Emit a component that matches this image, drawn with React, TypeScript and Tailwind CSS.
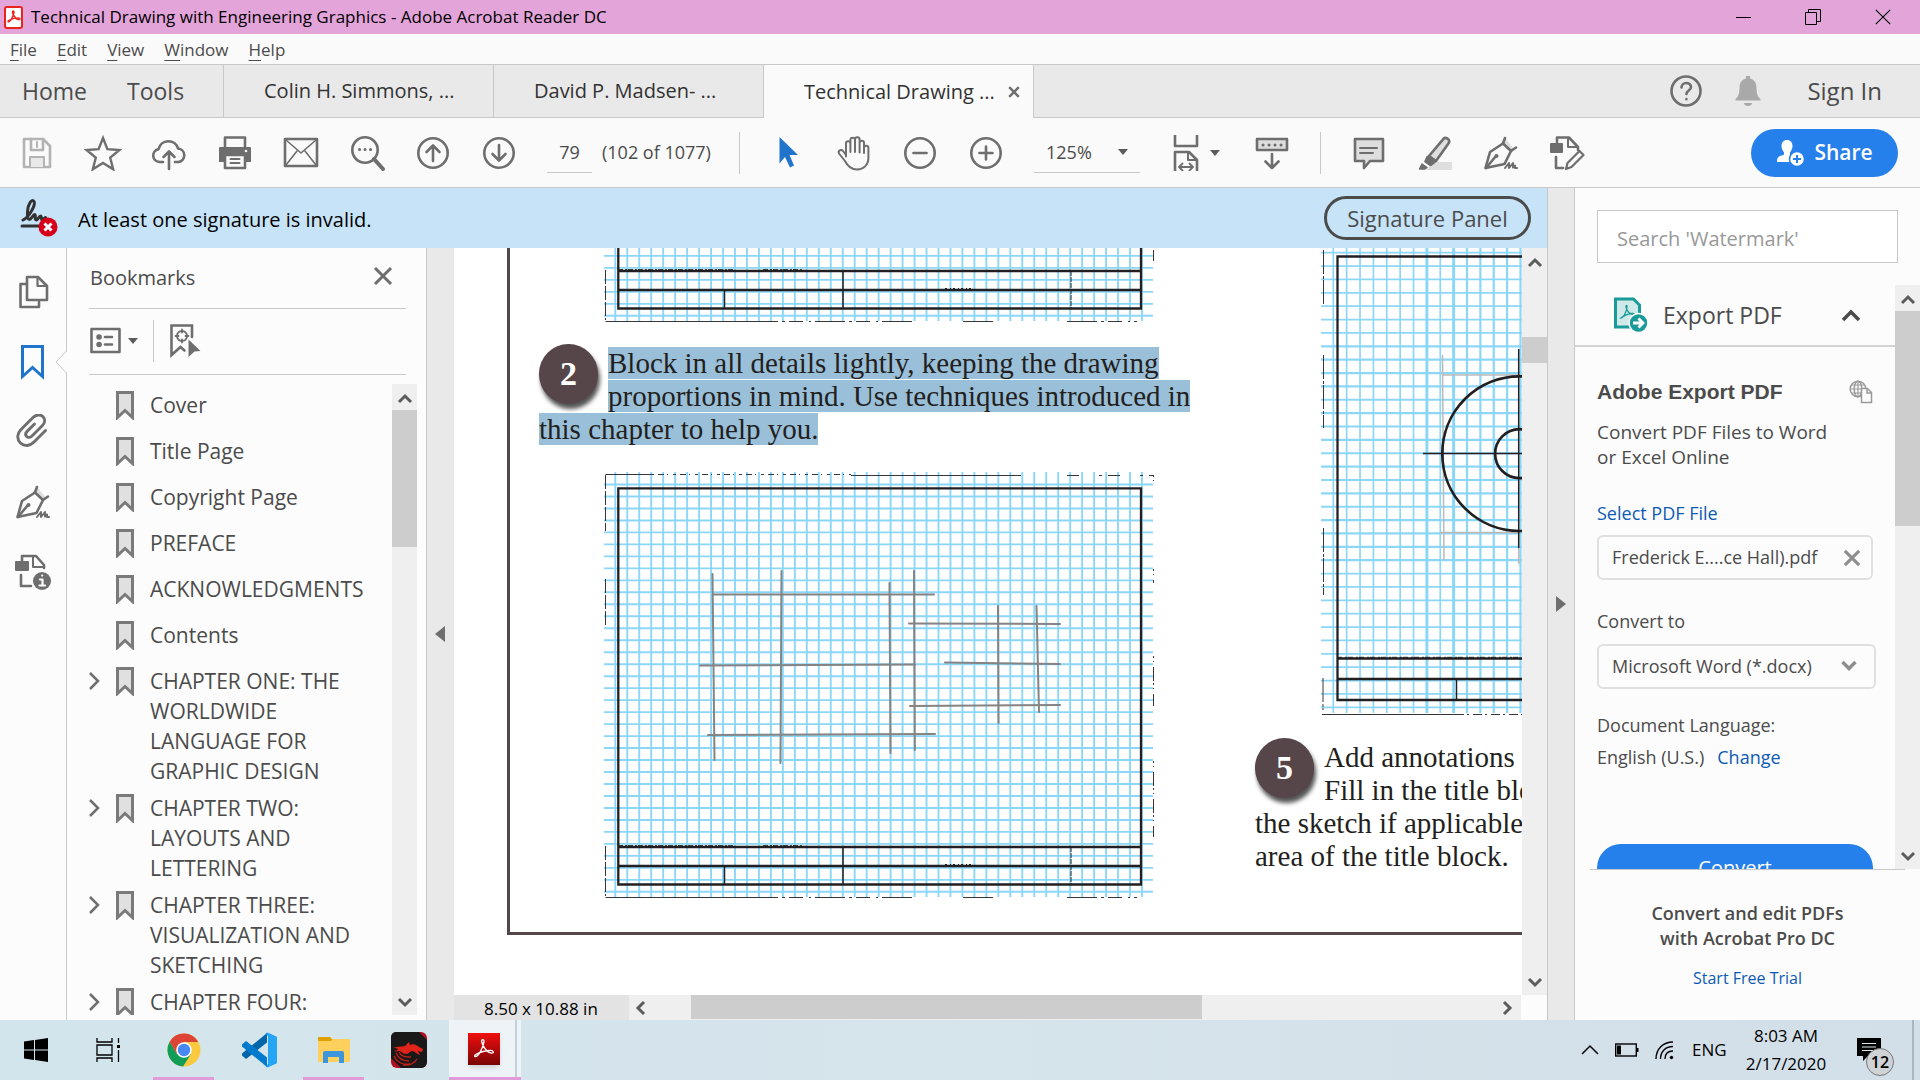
import { useState } from "react";
import type { ReactNode } from "react";

const bookmarks = [
  { title: "Cover" },
  { title: "Title Page" },
  { title: "Copyright Page" },
  { title: "PREFACE" },
  { title: "ACKNOWLEDGMENTS" },
  { title: "Contents" },
  { title: "CHAPTER ONE: THE WORLDWIDE LANGUAGE FOR GRAPHIC DESIGN", nested: true },
  { title: "CHAPTER TWO: LAYOUTS AND LETTERING", nested: true },
  { title: "CHAPTER THREE: VISUALIZATION AND SKETCHING", nested: true },
  { title: "CHAPTER FOUR:", nested: true },
];

const docTabs = ["Colin H. Simmons, ...", "David P. Madsen- ...", "Technical Drawing ..."];

type IconProps = { w?: number; h?: number; className?: string; children: ReactNode };

// Stroke icon drawn at its natural pixel size
function Icon({ w = 36, h = 36, className = "text-[#6e6e6e]", children }: IconProps) {
  return (
    <svg
      width={w}
      height={h}
      viewBox={`0 0 ${w} ${h}`}
      className={`shrink-0 ${className}`}
      fill="none"
      stroke="currentColor"
      strokeWidth={2.6}
      strokeLinecap="round"
      strokeLinejoin="round"
      aria-hidden="true"
    >
      {children}
    </svg>
  );
}

const SaveIcon = () => (
  <Icon className="text-[#b3b3b3]">
    <path d="M5 4h19l7 7v21H5z" />
    <path d="M12 4v11h12V4" />
    <path d="M18 7v5" strokeWidth={2} />
    <path d="M11 32V22h14v10" fill="#e9e9e9" strokeWidth={2} />
  </Icon>
);

const StarIcon = () => (
  <Icon w={38}>
    <path d="M19 3l4.400 11.200 12 .8-9.200 7.700 3 11.600L19 28l-10.200 6.300 3-11.600L2.600 15l12-.8z" strokeWidth={2.4} strokeLinejoin="miter" />
  </Icon>
);

const CloudIcon = () => (
  <Icon>
    <path d="M12 27H8.500a6.500 6.500 0 0 1-.9-12.900A10 10 0 0 1 27 13.500a6.800 6.800 0 0 1 .5 13.500H24" />
    <path d="M18 34V17M12.500 22l5.500-5.500 5.500 5.500" />
  </Icon>
);

const PrintIcon = () => (
  <Icon>
    <path d="M8 12V2.500h20V12" />
    <path d="M3 12h30a1 1 0 0 1 1 1v14H2V13a1 1 0 0 1 1-1z" fill="currentColor" stroke="none" />
    <path d="M8 20h20v13H8z" fill="#fafafa" />
    <path d="M13.500 24h9M13.500 28h9" strokeWidth={2} />
    <circle cx="29" cy="16" r="1.300" fill="#fafafa" stroke="none" />
  </Icon>
);

const MailIcon = () => (
  <Icon>
    <rect x="2" y="4" width="32" height="27" />
    <path d="M3 5l15 13L33 5M3 30l11-14M33 30L22 16" strokeWidth={1.6} />
  </Icon>
);

const FindIcon = () => (
  <Icon>
    <circle cx="16" cy="15" r="12.700" />
    <path d="M25 24l9 10" strokeWidth={4} />
    <path d="M10.500 14.500h.1M16 14.500h.1M21.500 14.500h.1" strokeWidth={3} />
  </Icon>
);

const ArrowCircleIcon = ({ down = false }: { down?: boolean }) => (
  <Icon>
    <circle cx="18" cy="18" r="14.700" />
    {down ? <path d="M18 10v15M11.500 19l6.500 6.500 6.500-6.500" /> : <path d="M18 26V11M11.500 17l6.500-6.500 6.500 6.500" />}
  </Icon>
);

const ZoomCircleIcon = ({ plus = false }: { plus?: boolean }) => (
  <Icon>
    <circle cx="18" cy="18" r="14.700" />
    <path d={plus ? "M11.500 18h13M18 11.500v13" : "M11.500 18h13"} />
  </Icon>
);

const PointerIcon = () => (
  <Icon className="text-[#2074cc]">
    <path d="M9.500 2L28 20h-8.500l4.500 10.500-4 2-5-10.500-5.500 6.500z" fill="currentColor" stroke="none" />
  </Icon>
);

const HandIcon = () => (
  <Icon>
    <path
      d="M10 21.500V8.500a2.200 2.200 0 0 1 4.400 0V17M14.400 17V5a2.300 2.300 0 0 1 4.600 0v12M19 17V4.500a2.300 2.300 0 0 1 4.600 0V17.500M23.600 17.500V8a2.200 2.200 0 0 1 4.400 0v4.500M28 18v-5a2.200 2.200 0 0 1 4.400 0v10c0 7-5 11.500-11.400 11.500-6.500 0-9.500-3.500-12-8.500L3 18.500c-1.300-2.800 2-4.700 4-2.500l3 4"
      strokeWidth={2}
    />
  </Icon>
);

const FitWidthIcon = () => (
  <Icon w={28}>
    <path d="M3 0v11h22V0" strokeLinecap="butt" />
    <path d="M3 36V17h14l8 8v11" strokeLinecap="butt" />
    <path d="M16 17v8h8" strokeWidth={2} />
    <path d="M7 32h14M10.500 28.500L7 32l3.500 3.500M17.500 28.500L21 32l-3.500 3.500" strokeWidth={1.8} />
  </Icon>
);

const ReadingIcon = () => (
  <Icon>
    <rect x="3" y="4" width="30" height="11" fill="#dedede" />
    <path d="M9 10h.1M15 10h.1M21 10h.1M27 10h.1" strokeWidth={3} />
    <path d="M18 19v14M11.500 26.500l6.500 6.500 6.500-6.500" />
  </Icon>
);

const CommentIcon = () => (
  <Icon>
    <path d="M4 4h28v22H19l-6 7v-7H4z" fill="#dedede" />
    <path d="M9 13h17M9 18h13" strokeWidth={2} />
  </Icon>
);

const HighlightIcon = () => (
  <Icon>
    <path d="M17 27h18v8H9z" fill="#dedede" stroke="none" />
    <path d="M12 21L26.500 3.800c2.500-2.300 7 .8 5.300 4.200L19 26z" fill="#dedede" />
    <path d="M10.500 22l7 5-4 3-5-3.500z" fill="currentColor" />
    <path d="M5 29l5 3.500-2 1.500H2.500z" fill="currentColor" strokeWidth={1.5} />
  </Icon>
);

const SignIcon = () => (
  <Icon>
    <path d="M22 3l9 11-4 2-9-8z" fill="#dedede" stroke="none" />
    <path d="M2.500 33L7 17l13-8.500 8 7.500-6.500 13z" />
    <path d="M3 33l10-12M22 3l-2 5.500M33 12.500l-5 3.500" />
    <circle cx="13.500" cy="21" r="2" fill="currentColor" stroke="none" />
    <path d="M22 33l4-5v5l4-5v4.500l2-2v2.500h2" strokeWidth={2} />
  </Icon>
);

const PageEditIcon = () => (
  <Icon>
    <path d="M8 8V2.500h12L29 12v3" />
    <path d="M19 3v9h9" strokeWidth={2} />
    <rect x="1" y="8" width="13" height="10" rx="1" fill="currentColor" stroke="none" />
    <path d="M7 22v11h7" />
    <path d="M17 34l1.500-6 12-12 4 4-12 12z" strokeWidth={2.2} />
  </Icon>
);

const PagesIcon = () => (
  <Icon>
    <path d="M11 10H5.500v23H24v-5" />
    <path d="M12 3h11l9 9v14H12z" />
    <path d="M22.500 3v9H32" strokeWidth={2.2} />
  </Icon>
);

const BookmarkIcon = () => (
  <Icon className="text-[#2074cc]">
    <path d="M7.500 2.500h20v30l-10-9-10 9z" strokeWidth={3} strokeLinejoin="miter" />
  </Icon>
);

const ClipIcon = () => (
  <Icon>
    <path
      d="M30.500 16.500L19 28c-4 4-9.500 5-13.500 1s-3.500-9.500.5-13.500L18 3.500c3-3 7.500-3.500 10-.8 2.500 2.600 2 6.300-.8 9L17 22c-1.700 1.700-4 1.800-5.300.5-1.500-1.500-1.200-3.500.4-5.100l7.400-7.400"
      strokeWidth={2.9}
    />
  </Icon>
);

const PageInfoIcon = () => (
  <Icon>
    <path d="M7 7V2h14l8 9v3" />
    <path d="M18 3v10h10" strokeWidth={2} />
    <rect x="0" y="7" width="14" height="10" rx="1" fill="currentColor" stroke="none" />
    <path d="M6 21v11h10" />
    <circle cx="27" cy="27" r="9" fill="currentColor" stroke="none" />
    <path d="M25 25.500h2.500v6M24.500 31.500h5.500M27.200 21.500v.1" stroke="#fff" strokeWidth={2.2} />
  </Icon>
);

const railItems = [
  { label: "Page thumbnails", icon: <PagesIcon /> },
  { label: "Bookmarks", icon: <BookmarkIcon /> },
  { label: "Attachments", icon: <ClipIcon /> },
  { label: "Signatures", icon: <SignIcon /> },
  { label: "Page information", icon: <PageInfoIcon /> },
];

function Caret({ dir }: { dir: "up" | "down" | "left" | "right" }) {
  const paths = {
    up: "M2 11l6-6 6 6",
    down: "M2 5l6 6 6-6",
    left: "M11 2L5 8l6 6",
    right: "M5 2l6 6-6 6",
  };
  return (
    <svg width="16" height="16" viewBox="0 0 16 16" className="shrink-0" aria-hidden="true">
      <path d={paths[dir]} fill="none" stroke="#5c5c5c" strokeWidth={3} />
    </svg>
  );
}

const DropArrow = () => (
  <svg width="12" height="8" viewBox="0 0 12 8" aria-hidden="true">
    <path d="M1 1h10L6 7z" fill="#5c5c5c" />
  </svg>
);

function Cross({ size, color = "#6e6e6e", width = 3 }: { size: number; color?: string; width?: number }) {
  return (
    <svg width={size} height={size} viewBox="0 0 20 20" aria-hidden="true">
      <path d="M2 2l16 16M18 2L2 18" stroke={color} strokeWidth={width} />
    </svg>
  );
}

function AcrobatMark({ size, color, width = 2 }: { size: number; color: string; width?: number }) {
  return (
    <svg width={size} height={size} viewBox="0 0 24 24" aria-hidden="true">
      <path
        d="M2 20c3 2 9-9 10-16 .3-3-3-3-2.500 0C10 8 15 16 20 16.500c3.500.3 2.500-3-1-3C14 13.500 6 16 3 18c-1.200.8-1.500 1.500-1 2z"
        fill="none"
        stroke={color}
        strokeWidth={width}
        strokeLinejoin="round"
      />
    </svg>
  );
}

function ToolButton({ label, children }: { label: string; children: ReactNode }) {
  return (
    <button aria-label={label} className="flex h-12 w-[66px] shrink-0 items-center justify-center">
      {children}
    </button>
  );
}

function TitleBar() {
  return (
    <header className="flex h-[34px] shrink-0 items-center bg-[#e3a4da] pl-1">
      <span className="flex h-[23px] w-[19px] items-center justify-center rounded-[3px] border-2 border-[#e8241c] bg-white">
        <AcrobatMark size={14} color="#e8241c" width={2.5} />
      </span>
      <h1 className="pl-2 text-[17px] text-black">Technical Drawing with Engineering Graphics - Adobe Acrobat Reader DC</h1>
      <div className="ml-auto flex pr-[2px]">
        <button aria-label="Minimize" className="flex h-[34px] w-[70px] items-center justify-center">
          <span className="h-px w-[15px] bg-black" />
        </button>
        <button aria-label="Restore" className="flex h-[34px] w-[70px] items-center justify-center">
          <svg width="16" height="16" viewBox="0 0 16 16" fill="none" stroke="#000" aria-hidden="true">
            <path d="M.5 3.500h11v12H.5zM3.500 3.500v-3h12v12h-4" />
          </svg>
        </button>
        <button aria-label="Close" className="flex h-[34px] w-[70px] items-center justify-center">
          <Cross size={18} color="#000" width={1.3} />
        </button>
      </div>
    </header>
  );
}

function MenuBar() {
  return (
    <nav className="flex h-[31px] shrink-0 items-center gap-5 border-b border-[#c8c8c8] bg-[#fafafa] px-[10px] text-[17px] text-[#4b4b4b]">
      {["File", "Edit", "View", "Window", "Help"].map((item) => (
        <button key={item} className="leading-none">
          <span className="underline underline-offset-4">{item[0]}</span>
          {item.slice(1)}
        </button>
      ))}
    </nav>
  );
}

function TabBar() {
  const [active, setActive] = useState(2);
  return (
    <div className="flex h-[53px] shrink-0 bg-[#e9e9e9] text-[#4b4b4b]">
      <div className="flex w-[224px] shrink-0 items-center gap-10 border-r border-b border-[#c8c8c8] pl-[22px] text-[23px]">
        <button>Home</button>
        <button>Tools</button>
      </div>
      {docTabs.map((tab, i) => (
        <div
          key={tab}
          className={`flex w-[270px] shrink-0 items-center border-r border-[#c8c8c8] pl-10 text-xl text-[#323232] ${
            active === i ? "bg-[#fafafa]" : "border-b"
          }`}
        >
          <button onClick={() => setActive(i)} className="w-[204px] text-left whitespace-nowrap">
            {tab}
          </button>
          {active === i && (
            <button aria-label="Close tab">
              <Cross size={12} width={4} />
            </button>
          )}
        </div>
      ))}
      <div className="flex flex-1 items-center justify-end border-b border-[#c8c8c8] pr-[38px]">
        <button aria-label="Help" className="mr-[32px]">
          <Icon w={34} h={34}>
            <circle cx="17" cy="17" r="14.500" />
            <path d="M12.500 13.500c0-6 9.500-6 9.500-.5 0 3.500-4.500 3.500-4.500 7M17.400 25v.2" />
          </Icon>
        </button>
        <button aria-label="Notifications" className="mr-[46px]">
          <svg width="26" height="32" viewBox="0 0 26 32" fill="#a9a9a9" aria-hidden="true">
            <path d="M11 1h4v2.500c4.500 1 6.500 4.500 6.500 9.500 0 6 1.500 9 4 11v1.500H.5V24c2.500-2 4-5 4-11 0-5 2-8.500 6.500-9.500zM9 28h8c0 4-8 4-8 0z" />
          </svg>
        </button>
        <button className="text-2xl font-medium">Sign In</button>
      </div>
    </div>
  );
}

function Toolbar() {
  return (
    <div className="flex h-[70px] shrink-0 items-center border-b border-[#c8c8c8] bg-[#fafafa] pr-[22px] pl-1 text-[18px] text-[#4b4b4b]">
      <ToolButton label="Save"><SaveIcon /></ToolButton>
      <ToolButton label="Star"><StarIcon /></ToolButton>
      <ToolButton label="Upload"><CloudIcon /></ToolButton>
      <ToolButton label="Print"><PrintIcon /></ToolButton>
      <ToolButton label="Email"><MailIcon /></ToolButton>
      <ToolButton label="Find"><FindIcon /></ToolButton>
      <ToolButton label="Previous page"><ArrowCircleIcon /></ToolButton>
      <ToolButton label="Next page"><ArrowCircleIcon down /></ToolButton>
      <input
        aria-label="Page number"
        defaultValue="79"
        className="ml-[15px] h-10 w-[45px] shrink-0 border-b border-[#c8c8c8] text-center outline-none"
      />
      <span className="ml-[10px] w-[137px] shrink-0 whitespace-nowrap">(102 of 1077)</span>
      <span className="mr-[15px] h-[42px] w-px bg-[#c8c8c8]" />
      <ToolButton label="Select tool"><PointerIcon /></ToolButton>
      <ToolButton label="Hand tool"><HandIcon /></ToolButton>
      <ToolButton label="Zoom out"><ZoomCircleIcon /></ToolButton>
      <ToolButton label="Zoom in"><ZoomCircleIcon plus /></ToolButton>
      <div className="relative ml-[15px] w-[106px] shrink-0 border-b border-[#c8c8c8]">
        <select aria-label="Zoom level" className="h-10 w-full appearance-none pl-3 outline-none">
          <option>125%</option>
        </select>
        <span className="pointer-events-none absolute top-4 right-[11px]"><DropArrow /></span>
      </div>
      <button aria-label="Page fit" className="ml-8 flex w-[49px] shrink-0 items-center justify-between">
        <FitWidthIcon />
        <DropArrow />
      </button>
      <div className="ml-[18px]"><ToolButton label="Reading mode"><ReadingIcon /></ToolButton></div>
      <span className="mr-[15px] ml-[15px] h-[42px] w-px bg-[#c8c8c8]" />
      <ToolButton label="Comment"><CommentIcon /></ToolButton>
      <ToolButton label="Highlight"><HighlightIcon /></ToolButton>
      <ToolButton label="Sign"><SignIcon /></ToolButton>
      <ToolButton label="Edit page"><PageEditIcon /></ToolButton>
      <button className="ml-auto flex h-12 w-[147px] items-center justify-center gap-2 rounded-full bg-[#2680eb] text-[21px] font-semibold text-white">
        <svg width="30" height="28" viewBox="0 0 30 28" aria-hidden="true">
          <path d="M11 1c3.500 0 5.500 2.500 5.500 6 0 3-1.500 5-2.500 6.500v2.500c0 1 4 2 5 3v4H1c0-4 1-5 3-6 2-.8 4-.5 4-2v-1.500C7 12 5.500 10 5.500 7c0-3.500 2-6 5.500-6z" fill="#fff" />
          <circle cx="21" cy="20" r="7.500" fill="#fff" stroke="#2680eb" strokeWidth="1.500" />
          <path d="M21 16v8M17 20h8" stroke="#2680eb" strokeWidth="2" />
        </svg>
        Share
      </button>
    </div>
  );
}

function SignatureBar() {
  return (
    <div className="flex h-[60px] shrink-0 items-center bg-[#c7e3f8] pr-4 pl-5">
      <svg width="40" height="38" viewBox="0 0 40 38" className="shrink-0" aria-hidden="true">
        <path
          d="M3 21c6-3 13-15 11-18.500-2-3-6 2-6.500 10-.3 6 .5 8 2 8 2 0 3.500-5 5-5 2 0-.5 5.500 2 5.500 1.500 0 2.500-4 4-4s0 4 2 3.500l3-2M2 27h17"
          fill="none"
          stroke="#323232"
          strokeWidth="3"
          strokeLinecap="round"
          strokeLinejoin="round"
        />
        <circle cx="28" cy="28" r="9.500" fill="#d7001a" />
        <path d="M24.500 24.500l7 7M31.500 24.500l-7 7" stroke="#fff" strokeWidth="3" />
      </svg>
      <p className="pt-[3px] pl-[18px] text-xl text-black">At least one signature is invalid.</p>
      <button className="ml-auto h-11 w-[207px] rounded-full border-3 border-[#4b4b4b] text-[22px] leading-none font-medium text-[#4b4b4b]">
        Signature Panel
      </button>
    </div>
  );
}

function ScrollY({ before, thumb }: { before: string; thumb: string }) {
  return (
    <div className="flex w-[25px] shrink-0 flex-col items-center bg-[#efefef]">
      <button aria-label="Scroll up" className="flex h-[26px] w-full shrink-0 items-center justify-center pt-1">
        <Caret dir="up" />
      </button>
      <span className={before} />
      <span className={`w-full bg-[#cdcdcd] ${thumb}`} />
      <button aria-label="Scroll down" className="mt-auto flex h-[26px] w-full shrink-0 items-center justify-center">
        <Caret dir="down" />
      </button>
    </div>
  );
}

function Rail() {
  return (
    <nav className="relative flex w-[67px] shrink-0 flex-col items-center border-r border-[#c8c8c8] bg-[#fcfcfc] pt-[9px]">
      {railItems.map((item) => (
        <button key={item.label} aria-label={item.label} className="flex h-[70px] w-full items-center justify-center">
          {item.icon}
        </button>
      ))}
      {/* Notch that points at the open panel */}
      <svg width="12" height="24" viewBox="0 0 12 24" className="absolute top-[102px] -right-px" aria-hidden="true">
        <path d="M12 1L1 12l11 11z" fill="#fcfcfc" />
        <path d="M11.500 1L1 12l10.500 11" fill="none" stroke="#c8c8c8" />
      </svg>
    </nav>
  );
}

function BookmarksPanel() {
  return (
    <aside className="flex w-[360px] shrink-0 flex-col border-r border-[#c8c8c8] bg-[#fcfcfc] text-[#4b4b4b]">
      <div className="mr-5 ml-[22px] flex h-[61px] shrink-0 items-center justify-between border-b border-[#c8c8c8] pr-[13px]">
        <h2 className="pl-px text-xl">Bookmarks</h2>
        <button aria-label="Close panel" className="pb-1">
          <Cross size={20} />
        </button>
      </div>
      <div className="mr-5 ml-[22px] flex h-[66px] shrink-0 items-center border-b border-[#c8c8c8] pb-px">
        <button aria-label="Options" className="flex items-center gap-[6px] pl-px">
          <Icon w={31} h={28}>
            <rect x="1.500" y="2" width="28" height="23" />
            <path d="M9 10h.1M9 17.500h.1" strokeWidth={5.5} />
            <path d="M15 10h7M15 17.500h7" />
          </Icon>
          <DropArrow />
        </button>
        <span className="mr-4 ml-[14px] h-[42px] w-px bg-[#c8c8c8]" />
        <button aria-label="Find current bookmark">
          <Icon w={32}>
            <path d="M22 14V2.500H1.500V32l9-8 4 3.500" strokeLinejoin="miter" />
            <circle cx="12" cy="13" r="5" strokeWidth={2} />
            <path d="M12 6.500v3M12 16.500v3M5.500 13h3M15.500 13h3" strokeWidth={1.8} />
            <path d="M18.500 16.500l12 11.500-6 .5-6 5.500z" fill="currentColor" stroke="none" />
          </Icon>
        </button>
      </div>
      <div className="mt-[9px] mr-[9px] mb-[5px] flex min-h-0 flex-1">
        <ul className="min-w-0 flex-1 overflow-hidden pt-[6px] pl-[22px] text-[21px] leading-[30px]">
          {bookmarks.map((b) => (
            <li key={b.title} className="flex min-h-[46px] items-start pb-[7px]">
              <span className="flex h-[30px] w-[27px] shrink-0 items-center">
                {b.nested && (
                  <svg width="11" height="20" viewBox="0 0 11 20" aria-hidden="true">
                    <path d="M1 2l8 8-8 8" fill="none" stroke="#6e6e6e" strokeWidth="2.500" />
                  </svg>
                )}
              </span>
              <svg width="18" height="30" viewBox="0 0 18 30" className="mr-4 shrink-0" aria-hidden="true">
                <path d="M1.500 2.500h15v25L9 20.500l-7.500 7z" fill="#e0e0e0" stroke="#7a7a7a" strokeWidth="3" />
              </svg>
              <a href="#page" className="pr-6">{b.title}</a>
            </li>
          ))}
        </ul>
        <ScrollY before="h-0" thumb="h-[137px]" />
      </div>
    </aside>
  );
}

function Splitter({ dir }: { dir: "left" | "right" }) {
  return (
    <button
      aria-label={dir === "left" ? "Collapse bookmarks" : "Collapse tools"}
      className={`flex shrink-0 items-center justify-center bg-[#e9e9e9] ${
        dir === "right" ? "w-7 border-x border-[#c8c8c8] pr-px" : "w-[27px] pr-px"
      }`}
    >
      <svg width="10" height="18" viewBox="0 0 10 18" fill="#6e6e6e" aria-hidden="true">
        <path d={dir === "left" ? "M10 1v16L0 9z" : "M0 1v16l10-8z"} />
      </svg>
    </button>
  );
}

function range(start: number, step: number, count: number) {
  return Array.from({ length: count }, (_, i) => start + i * step);
}

// Pencil strokes of the blocked-in sketch: x1, y1, x2, y2
const strokes = [
  [109.5, 103, 111.5, 289],
  [178.5, 100, 177.5, 292],
  [286.5, 112, 287.5, 282],
  [311, 100, 311.8, 279],
  [395, 135, 395.5, 252],
  [433.5, 135, 436, 241],
  [110, 123.5, 331, 123.5],
  [97, 194.5, 312, 193.5],
  [105, 264, 332, 263],
  [306, 152.5, 457, 153],
  [342, 191.5, 457, 193],
  [307, 235, 457, 234],
];

function SketchSheet({ top = 0, sketch = false }: { top?: number; sketch?: boolean }) {
  return (
    <svg width="552" height={428 - top} viewBox={`0 ${top} 552 ${428 - top}`} className="ml-16 shrink-0" fill="none" aria-hidden="true">
      <g stroke="#8cd7f8" strokeWidth="1.900">
        {range(12.3, 11.97, 45).map((x) => <path key={x} d={`M${x} 1V426`} />)}
        {range(13.5, 11.98, 35).map((y) => <path key={y} d={`M1 ${y}H550`} />)}
      </g>
      <g stroke="#231f20" strokeWidth="2.300">
        <path d="M15.300 17.300H538V413.500H15.300z" />
        <path d="M15 376H538M15 395H538" />
        <path d="M121.500 395v18M240 376v37" strokeWidth="1.500" />
        <path d="M468 376v37" strokeWidth="1" strokeDasharray="5 1" />
        <path d="M15 374.700H130M160 374.700H200" strokeWidth="1" strokeDasharray="5 2 2 1" />
        <path d="M342 393.500H368" strokeWidth="1" strokeDasharray="2 3 1 2" />
      </g>
      <g stroke="#3a3637" strokeWidth="1">
        <path d="M2.500 3.500H48" />
        <path d="M48 3.500H248" strokeDasharray="3 4 6 3 1 5" />
        <path d="M248 4.500H418" />
        <path d="M464 4.500H550" strokeDasharray="12 20 3 6" />
        <path d="M2.500 4V60M2.500 108V155M2.500 375V425" strokeDasharray="14 2" />
        <path d="M2.500 426.500H145" />
        <path d="M145 426.500H310M360 426.500H392M464 426.500H534" strokeDasharray="30 4 3 4 14 6 2 4" />
        <path d="M550.500 4V10M550.500 98V112M550.500 185V235M550.500 290V366" strokeDasharray="2 3 1 5 14 2" />
      </g>
      {sketch && (
        <g stroke="#858383" strokeWidth="2" strokeLinecap="round">
          {strokes.map(([x1, y1, x2, y2]) => (
            <path key={`${x1}-${y1}`} d={`M${x1} ${y1}L${x2} ${y2}`} />
          ))}
        </g>
      )}
    </svg>
  );
}

function CircleSheet() {
  return (
    <svg width="560" height="468" viewBox="0 0 560 468" className="ml-[65px] shrink-0" fill="none" aria-hidden="true">
      <g stroke="#8cd7f8" strokeWidth="1.700">
        {range(13.3, 13.37, 40).map((x, i) => (
          <path key={x} d={`M${x} 0V465`} strokeWidth={i === 7 || i === 9 ? 3 : i > 9 ? 2.2 : 1.7} />
        ))}
        {range(4.7, 13.37, 35).map((y, i) => (
          <path key={y} d={`M1 ${y}H560`} strokeWidth={i > 6 && i < 24 ? 2.2 : 1.7} />
        ))}
      </g>
      <g stroke="#bdb9b9" strokeWidth="1.500">
        <path d="M122.500 107L124 312M123 127H200M120 284.500H200M198.700 300V316" />
      </g>
      <g stroke="#231f20" strokeWidth="2.300">
        <path d="M17.500 8.500H540V452H17.500zM17.500 410.500H540M17.500 431H540" />
        <path d="M17 409.300H200" strokeWidth="1" strokeDasharray="5 3 2 1" />
        <path d="M136.500 431v21" strokeWidth="1.500" />
        <circle cx="199.600" cy="205.700" r="77.300" strokeWidth="2.700" />
        <circle cx="199.600" cy="205.700" r="24.500" strokeWidth="2.700" />
        <path d="M198.700 101V300M103 205.500H300" strokeWidth="1.500" />
      </g>
      <g stroke="#3a3637">
        <path d="M3.500 2V58M3.500 107V180M3.500 280V347M3 430V462" strokeDasharray="24 2 3 1" />
        <path d="M2 466.500H135" />
        <path d="M135 466.500H540" strokeDasharray="9 3 2 4" />
      </g>
    </svg>
  );
}

function StepBadge({ n }: { n: number }) {
  return (
    <span className="float-left -mt-[3px] mr-[10px] flex h-[60px] w-[59px] items-center justify-center rounded-full bg-[#564549] text-[34px] leading-none font-bold text-white shadow-[2px_5px_4px_#555]">
      {n}
    </span>
  );
}

function DocumentView() {
  return (
    <main className="flex min-w-0 flex-1 flex-col bg-white">
      <div className="flex min-h-0 flex-1">
        <div className="min-w-0 flex-1 overflow-hidden">
          <article
            id="page"
            className="ml-[53px] flex border-b-3 border-l-3 border-[#524649] pb-[33px] font-['Liberation_Serif','Times_New_Roman',serif] text-[29px] leading-[33px] whitespace-nowrap text-[#231f20]"
          >
            <section className="w-[745px] shrink-0 pl-[29px]">
              <SketchSheet top={353} />
              <div className="mt-6">
                <StepBadge n={2} />
                <p>
                  <mark className="bg-[#9abfd9] text-[#231f20]">
                    Block in all details lightly, keeping the drawing
                    <br />
                    proportions in mind. Use techniques introduced in
                    <br />
                    this chapter to help you.
                  </mark>
                </p>
              </div>
              <div className="mt-[25px]">
                <SketchSheet sketch />
              </div>
            </section>
            <section className="shrink-0">
              <CircleSheet />
              <div className="mt-[25px]">
                <StepBadge n={5} />
                <p>
                  Add annotations to
                  <br />
                  Fill in the title block
                  <br />
                  the sketch if applicable
                  <br />
                  area of the title block.
                </p>
              </div>
            </section>
          </article>
        </div>
        <ScrollY before="h-[63px] shrink-0" thumb="h-[26px] shrink-0" />
      </div>
      <div className="flex h-[25px] shrink-0 bg-[#efefef]">
        <span className="w-[175px] shrink-0 bg-[#e3e3e3] pl-[30px] text-[17px] leading-[27px] text-black">8.50 x 10.88 in</span>
        <button aria-label="Scroll left" className="flex w-[62px] shrink-0 items-center pl-1">
          <Caret dir="left" />
        </button>
        <span className="mb-px w-[511px] bg-[#cdcdcd]" />
        <button aria-label="Scroll right" className="ml-auto flex items-center pr-[6px]">
          <Caret dir="right" />
        </button>
        <span className="w-[26px] shrink-0 bg-[#fcfcfc]" />
      </div>
    </main>
  );
}

function ToolsPane() {
  return (
    <aside className="flex w-[345px] shrink-0 flex-col bg-[#fcfcfc] text-[18px] text-[#4b4b4b]">
      <input
        aria-label="Search tools"
        placeholder="Search 'Watermark'"
        className="mx-[22px] mt-[22px] h-[53px] shrink-0 border border-[#c8c8c8] bg-white px-[19px] pt-[3px] text-xl outline-none placeholder:text-[#999]"
      />
      <div className="mt-[22px] flex min-h-0 flex-1">
        <div className="min-w-0 flex-1 overflow-hidden">
          <button className="flex h-[62px] w-full items-center border-b-2 border-[#d4d4d4] pr-[34px] pl-[39px] text-[23px]">
            <svg width="35" height="36" viewBox="0 0 35 36" aria-hidden="true">
              <path d="M1.500 2h18l6 6v22h-24z" fill="#cfe8e8" stroke="#1b9a9a" strokeWidth="3" />
              <path d="M7 21c3 0 6-8 6-11.500 0-2-1.500-1-1 .5 1 4 4 7 7 7.500 2 .3 1.500-1 0-1-4 0-9 2-12 4.500z" fill="none" stroke="#1b9a9a" strokeWidth="1.300" />
              <circle cx="24.500" cy="26" r="9.500" fill="#1b9a9a" stroke="#fcfcfc" strokeWidth="1.500" />
              <path d="M19 26h8M24.500 21.500L29 26l-4.500 4.500" fill="none" stroke="#fff" strokeWidth="2.800" />
            </svg>
            <span className="pl-[14px]">Export PDF</span>
            <svg width="20" height="14" viewBox="0 0 20 14" className="ml-auto" aria-hidden="true">
              <path d="M2 12l8-8 8 8" fill="none" stroke="#4b4b4b" strokeWidth="3.500" />
            </svg>
          </button>
          <div className="pr-[22px] pl-[22px]">
            <div className="mt-8 flex h-[26px] items-center justify-between">
              <h2 className="font-['Liberation_Sans',Arial,sans-serif] text-[21px] font-bold">Adobe Export PDF</h2>
              <svg width="24" height="24" viewBox="0 0 24 24" fill="none" stroke="#9a9a9a" strokeWidth="1.500" aria-hidden="true">
                <circle cx="9" cy="9" r="7.800" />
                <ellipse cx="9" cy="9" rx="3.800" ry="7.800" />
                <path d="M9 1v16M1 9h16M2.500 5h13M2.500 13h13" strokeWidth="1.200" />
                <path d="M12.500 8.500h6l4 4v10h-10z" fill="#fcfcfc" />
                <path d="M18 8.500v4.500h4.500" />
              </svg>
            </div>
            <p className="mt-[15px] text-[19px] leading-[25px]">
              Convert PDF Files to Word
              <br />
              or Excel Online
            </p>
            <a href="#select" className="mt-[31px] block leading-[25px] text-[#0d5bb5]">Select PDF File</a>
            <div className="mt-[9px] flex h-[45px] items-center justify-between rounded-md border-2 border-[#e0e0e0] pr-[10px] pl-[13px]">
              <span className="whitespace-nowrap">Frederick E....ce Hall).pdf</span>
              <button aria-label="Remove file">
                <Cross size={18} color="#8e8e8e" width={3.5} />
              </button>
            </div>
            <label htmlFor="format" className="mt-[29px] block leading-[25px]">Convert to</label>
            <div className="relative mt-[10px] -mr-[3px]">
              <select id="format" className="h-[45px] w-full appearance-none rounded-md border-2 border-[#e0e0e0] pl-[13px] outline-none">
                <option>Microsoft Word (*.docx)</option>
              </select>
              <svg width="16" height="12" viewBox="0 0 16 12" className="pointer-events-none absolute top-4 right-[19px]" aria-hidden="true">
                <path d="M1.500 2L8 8.500 14.500 2" fill="none" stroke="#8e8e8e" strokeWidth="3.500" />
              </svg>
            </div>
            <p className="mt-5 leading-8">
              Document Language:
              <br />
              English (U.S.)
              <a href="#language" className="ml-[13px] text-[#0d5bb5]">Change</a>
            </p>
            <button className="mt-[71px] h-12 w-full rounded-full bg-[#2680eb] text-xl text-white">Convert</button>
          </div>
        </div>
        <ScrollY before="h-0" thumb="h-[215px]" />
      </div>
      <footer className="mr-[15px] ml-[15px] h-[151px] shrink-0 border-t border-[#c8c8c8] pt-[31px] text-center leading-[25px]">
        <p className="font-semibold">
          Convert and edit PDFs
          <br />
          with Acrobat Pro DC
        </p>
        <a href="#trial" className="mt-[15px] block text-base leading-[25px] text-[#0d5bb5]">Start Free Trial</a>
      </footer>
    </aside>
  );
}

function TaskItem({ label, open = false, children }: { label: string; open?: boolean; children: ReactNode }) {
  return (
    <button aria-label={label} className="flex h-full w-[75px] shrink-0 flex-col items-center">
      <span className="flex flex-1 items-center pt-[2px]">{children}</span>
      <span className={`h-[3px] w-[61px] ${open ? "bg-[#e09bd8]" : ""}`} />
    </button>
  );
}

function Taskbar() {
  return (
    <footer className="flex h-[60px] shrink-0 bg-linear-to-r from-[#d3e5ec] via-[#d6e4ec] to-[#d2dfe8] text-[17px] text-black">
      <button aria-label="Start" className="flex h-full w-[71px] shrink-0 items-center justify-center">
        <svg width="24" height="24" viewBox="0 0 24 24" aria-hidden="true">
          <path d="M0 3.500l10-1.400V11.500H0zM11 2l13-2v11.500H11zM0 12.500h10v9.400L0 20.500zM11 12.500h13V24l-13-2z" />
        </svg>
      </button>
      <TaskItem label="Task view">
        <svg width="26" height="24" viewBox="0 0 26 24" fill="none" stroke="#000" strokeWidth="1.300" aria-hidden="true">
          <path d="M1 0v4h15V0M1 24v-4h15v4M1 7h15v10H1zM22.500 0v5M22.500 12v12" />
          <path d="M21 7h3v3h-3z" fill="#000" stroke="none" />
        </svg>
      </TaskItem>
      <TaskItem label="Chrome" open>
        <svg width="34" height="34" viewBox="0 0 34 34" aria-hidden="true">
          <circle cx="17" cy="17" r="16.500" fill="#fbc93d" />
          <path d="M2.700 8.700A16.500 16.500 0 0 0 16 33.500L24 21 17 17 9.800 21z" fill="#109d58" />
          <path d="M2.700 8.700L9.800 21 17 9h14.300A16.500 16.500 0 0 0 2.700 8.700z" fill="#db4437" />
          <circle cx="17" cy="17" r="7.800" fill="#fff" />
          <circle cx="17" cy="17" r="6.200" fill="#4688f4" />
        </svg>
      </TaskItem>
      <TaskItem label="Visual Studio Code">
        <svg width="36" height="36" viewBox="0 0 36 36" aria-hidden="true">
          <path d="M26 1v9.500L5 27l-4-3.500v-2z" fill="#0065a9" />
          <path d="M1 12.500L5 9l21 16.500V35L1 14.500z" fill="#007acc" />
          <path d="M26 .5L36 5v26l-10 4.500-1.500-1L27 32V4l-2.500-2.500z" fill="#1f9cf0" />
          <path d="M27 .8L36 5v26l-9 4.200z" fill="#27a5f5" />
        </svg>
      </TaskItem>
      <TaskItem label="File Explorer" open>
        <svg width="32" height="28" viewBox="0 0 32 28" aria-hidden="true">
          <path d="M0 2a1 1 0 0 1 1-1h11l3 3v5H0z" fill="#e0a100" />
          <path d="M0 5h13l2-2h16a1 1 0 0 1 1 1v21a1 1 0 0 1-1 1H0z" fill="#ffd15c" />
          <path d="M5 27V17a2 2 0 0 1 2-2h17a2 2 0 0 1 2 2v10h-5v-6H10v6z" fill="#3b96dd" />
        </svg>
      </TaskItem>
      <TaskItem label="Dragon Center">
        <svg width="36" height="36" viewBox="0 0 36 36" aria-hidden="true">
          <rect width="36" height="36" rx="6" fill="#b01020" />
          <path d="M5 0h23l8 8v22a6 6 0 0 1-6 6H10L0 26V5a5 5 0 0 1 5-5z" fill="#191919" />
          <path d="M2 16c5-2 8-1 12-2l4-4 1 3c4-2 7 0 9 2l4 2-1 3-4-1 2 4c-4-1-5-4-8-4-2 0-3 3-6 3-4 0-4-3-7-3-2 0-4 1-5 0 2 0 3-1 4-2-1-1-3-1-5-1z" fill="#e2231a" />
          <path d="M3 24c3 7 10 9 16 8M5 21c3 7 9 8 13 8M12 33c6 1 12-2 14-6M8 20c2 5 7 5 12 5" fill="none" stroke="#c81e18" strokeWidth="1.300" />
        </svg>
      </TaskItem>
      <button aria-label="Adobe Acrobat Reader" className="ml-[3px] flex h-full w-[72px] shrink-0 flex-col border-b-3 border-[#e09bd8] bg-[#eef3f7]">
        <span className="flex w-[68px] flex-1 items-center justify-center border-r-2 border-[#c2d1d9] pl-1">
          <span className="flex size-8 items-center justify-center bg-linear-to-b from-[#f20f0f] to-[#7a0505] shadow-md">
            <AcrobatMark size={22} color="#fff" width={1.5} />
          </span>
        </span>
      </button>
      <div className="ml-auto flex items-center">
        <button aria-label="Show hidden icons" className="mr-4">
          <svg width="18" height="12" viewBox="0 0 18 12" fill="none" stroke="#000" strokeWidth="1.500" aria-hidden="true">
            <path d="M1 10l8-8 8 8" />
          </svg>
        </button>
        <svg width="24" height="14" viewBox="0 0 24 14" className="mr-4" aria-hidden="true">
          <rect x=".7" y="1" width="20.600" height="12" fill="none" stroke="#000" strokeWidth="1.400" />
          <path d="M2 2.500h4v9H2zM22 5h1.500v4H22z" />
        </svg>
        <svg width="19" height="19" viewBox="0 0 19 19" fill="none" stroke="#000" strokeWidth="1.400" className="mr-[18px]" aria-hidden="true">
          <path d="M1 18C1 8 8 1 18 1M5.500 18C5.500 10.500 10.500 5.500 18 5.500M10 18c0-5 3-8 8-8" />
          <circle cx="16.500" cy="16.500" r="1.700" fill="#000" stroke="none" />
        </svg>
        <span className="w-[55px]">ENG</span>
        <div className="w-[78px] text-center leading-7 whitespace-nowrap">
          <p>8:03 AM</p>
          <p className="-mx-2">2/17/2020</p>
        </div>
        <button aria-label="Notifications" className="relative ml-8 h-12 w-10">
          <svg width="24" height="24" viewBox="0 0 24 24" className="absolute top-3 left-0" aria-hidden="true">
            <path d="M0 0h24v18H11l-5 5v-5H0z" />
            <path d="M5 5.500h14M5 9h14M5 12.500h14" stroke="#dbe6ec" strokeWidth="1.200" />
          </svg>
          <span className="absolute top-[22px] left-[9px] flex size-7 items-center justify-center rounded-full border border-[#777] bg-[#cfd3d6] text-base leading-none font-semibold">
            12
          </span>
        </button>
        <span className="ml-[15px] h-[60px] w-2 border-l-2 border-[#a9b7c0]" />
      </div>
    </footer>
  );
}

export default function App() {
  return (
    <div className="flex h-screen flex-col overflow-hidden bg-[#fcfcfc] font-['Open_Sans','Segoe_UI',sans-serif]">
      <TitleBar />
      <MenuBar />
      <TabBar />
      <Toolbar />
      <div className="flex min-h-0 flex-1">
        <div className="flex min-w-0 flex-1 flex-col">
          <SignatureBar />
          <div className="flex min-h-0 flex-1">
            <Rail />
            <BookmarksPanel />
            <Splitter dir="left" />
            <DocumentView />
          </div>
        </div>
        <Splitter dir="right" />
        <ToolsPane />
      </div>
      <Taskbar />
    </div>
  );
}
